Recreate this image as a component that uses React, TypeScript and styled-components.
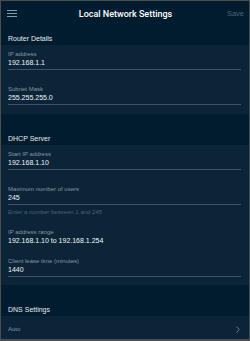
import React from "react";
import styled, { createGlobalStyle } from "styled-components";

const Global = createGlobalStyle`
  html, body { margin: 0; padding: 0; background: #4d4d4d; }
  body { font-family: "Liberation Sans", Arial, sans-serif; -webkit-font-smoothing: antialiased; }
`;

const Frame = styled.div`
  width: 248px;
  height: 338px;
  margin: 1px 1px 2px 1px;
  background: #011c2f;
  display: flex;
  flex-direction: column;
  overflow: hidden;
`;

const Header = styled.div`
  height: 25px;
  flex: none;
  display: flex;
  align-items: center;
  padding: 0 5px 0 6px;
`;

const Burger = styled.div`
  width: 10px;
  display: flex;
  flex-direction: column;
  gap: 2px;
  margin-top: -1px;
  span { display: block; height: 1px; background: #8a9aa8; }
`;

const Title = styled.div`
  flex: 1;
  text-align: center;
  color: #ffffff;
  font-family: Roboto, "Liberation Sans", sans-serif;
  font-size: 9px;
  font-weight: 500;
  padding-left: 10px;
`;

const Save = styled.div`
  color: #4f6273;
  font-size: 7.5px;
  width: 20px;
  text-align: right;
`;

const SectionTitle = styled.div<{ $h: number }>`
  height: ${(p) => p.$h}px;
  flex: none;
  box-sizing: border-box;
  padding: ${(p) => p.$h - 11}px 7px 0;
  color: #e6ebef;
  font-size: 7px;
  line-height: 10px;
`;

const Panel = styled.div<{ $pb: number }>`
  background: #0b2438;
  padding: 0 8px ${(p) => p.$pb}px 7px;
  display: flex;
  flex-direction: column;
  flex: none;
`;

const Field = styled.div<{ $line?: boolean; $top: number }>`
  padding-top: ${(p) => p.$top}px;
  padding-bottom: 1px;
  border-bottom: 1px solid ${(p) => (p.$line ? "#3d5466" : "transparent")};
  display: flex;
  flex-direction: column;
`;

const Label = styled.div`
  color: #8797a5;
  font-size: 6px;
  line-height: 8px;
`;

const Value = styled.div`
  color: #f1f4f6;
  font-size: 7px;
  line-height: 10px;
`;

const Hint = styled.div`
  color: #4c6274;
  font-size: 6px;
  line-height: 8px;
  padding-top: 3px;
`;

const Row = styled.div`
  background: #0b2438;
  height: 23px;
  flex: none;
  box-sizing: border-box;
  display: flex;
  align-items: center;
  justify-content: space-between;
  padding: 3px 9px 0 7px;
  color: #8797a5;
  font-size: 6px;
`;

export default function App() {
  return (
    <>
      <Global />
      <Frame>
        <Header>
          <Burger><span /><span /><span /></Burger>
          <Title>Local Network Settings</Title>
          <Save>Save</Save>
        </Header>
        <SectionTitle $h={19}>Router Details</SectionTitle>
        <Panel $pb={9}>
          <Field $line $top={5}>
            <Label>IP address</Label>
            <Value>192.168.1.1</Value>
          </Field>
          <Field $line $top={15}>
            <Label>Subnet Mask</Label>
            <Value>255.255.255.0</Value>
          </Field>
        </Panel>
        <SectionTitle $h={31}>DHCP Server</SectionTitle>
        <Panel $pb={8}>
          <Field $line $top={5}>
            <Label>Start IP address</Label>
            <Value>192.168.1.10</Value>
          </Field>
          <Field $line $top={15}>
            <Label>Maximum number of users</Label>
            <Value>245</Value>
          </Field>
          <Hint>Enter a number between 1 and 245</Hint>
          <Field $top={12}>
            <Label>IP address range</Label>
            <Value>192.168.1.10 to 192.168.1.254</Value>
          </Field>
          <Field $line $top={9}>
            <Label>Client lease time (minutes)</Label>
            <Value>1440</Value>
          </Field>
        </Panel>
        <SectionTitle $h={31}>DNS Settings</SectionTitle>
        <Row>
          <span>Auto</span>
          <svg width="4" height="7" viewBox="0 0 4 7">
            <path d="M0.5 0.5 L3.3 3.5 L0.5 6.5" fill="none" stroke="#6f8494" strokeWidth="0.9" />
          </svg>
        </Row>
      </Frame>
    </>
  );
}
